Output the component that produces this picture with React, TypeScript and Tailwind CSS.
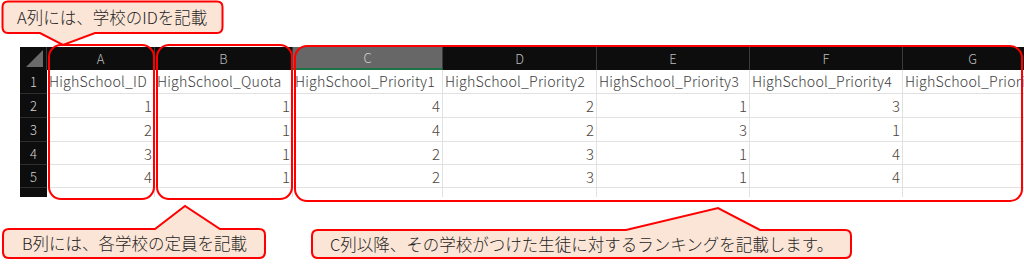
import React from "react";

const cols = ["A", "B", "C", "D", "E", "F", "G"];
const headers = [
  "HighSchool_ID",
  "HighSchool_Quota",
  "HighSchool_Priority1",
  "HighSchool_Priority2",
  "HighSchool_Priority3",
  "HighSchool_Priority4",
  "HighSchool_Priority5",
];
const data = [
  [1, 1, 4, 2, 1, 3],
  [2, 1, 4, 2, 3, 1],
  [3, 1, 2, 3, 1, 4],
  [4, 1, 2, 3, 1, 4],
];
const rowH = ["h-[24px]", "h-[24px]", "h-[23px]", "h-[23px]", "h-[24px]", "h-[9px]"];

function Sheet() {
  return (
    <div
      className="grid grid-cols-[27px_108px_138px_150px_154px_153px_153px_140px] overflow-hidden w-[1004px] text-[14.2px] font-light leading-none"
      style={{ fontFamily: '"Noto Sans CJK JP", "Noto Sans", sans-serif' }}
    >
      {/* header row */}
      <div className="h-[23px] bg-[#0d0d0d] relative border-r border-[#3a3a3a]">
        <div className="absolute right-[3px] bottom-[3px] w-0 h-0 border-l-[17px] border-l-transparent border-b-[17px] border-b-[#6b6b6b]" />
      </div>
      {cols.map((c) => (
        <div
          key={c}
          className={
            c === "C"
              ? "h-[23px] bg-[#676767] border-r border-[#3a3a3a] border-b-2 border-b-[#1e7145] flex items-center justify-center text-[13px] text-[#d0d0d0]"
              : "h-[23px] bg-[#0d0d0d] border-r border-[#3a3a3a] flex items-center justify-center text-[13px] text-[#bdbdbd]"
          }
        >
          {c}
        </div>
      ))}
      {/* row 1 */}
      <div className="h-[24px] bg-[#0d0d0d] border-b border-[#2e2e2e] flex items-center justify-center text-[13px] text-[#d4d4d4]">
        1
      </div>
      {headers.map((h) => (
        <div
          key={h}
          className="h-[24px] bg-white border-r border-b border-[#e1e1e1] flex items-center pl-[2px] text-[#404040] whitespace-nowrap overflow-hidden tracking-[0.2px]"
        >
          {h}
        </div>
      ))}
      {data.map((row, i) => (
        <React.Fragment key={i}>
          <div
            className={`${rowH[i]} bg-[#0d0d0d] border-b border-[#2e2e2e] flex items-center justify-center text-[13px] text-[#d4d4d4]`}
          >
            {i + 2}
          </div>
          {row.map((v, j) => (
            <div
              key={j}
              className={`${rowH[i]} bg-white border-r border-b border-[#e1e1e1] flex items-center justify-end pr-[2px] text-[15px] text-[#4d463c]`}
            >
              {v}
            </div>
          ))}
          <div className={`${rowH[i]} bg-white border-r border-b border-[#e1e1e1]`} />
        </React.Fragment>
      ))}
      <div className="h-[9px] bg-[#0d0d0d]" />
      {cols.map((c) => (
        <div key={c} className="h-[9px] bg-white border-r border-[#e1e1e1]" />
      ))}
    </div>
  );
}

export default function App() {
  const font = { fontFamily: '"Noto Sans CJK JP", "Noto Sans", sans-serif' };
  return (
    <div className="relative w-[1024px] h-[264px] bg-white overflow-hidden">
      <div className="pt-[47px] pl-[20px]">
        <Sheet />
      </div>

      <svg
        className="absolute inset-0 pointer-events-none"
        width="1024"
        height="264"
        viewBox="0 0 1024 264"
      >
        <g fill="none" stroke="#ff0000" strokeWidth="2">
          <rect x="49" y="45" width="105" height="154" rx="12" />
          <rect x="157" y="45" width="135" height="154" rx="12" />
          <rect x="295" y="46" width="727" height="155" rx="12" />
        </g>
        <g fill="#fbe5d6" stroke="#ff0000" strokeWidth="2" strokeLinejoin="miter">
          <path d="M8 1.5 H217 Q222.5 1.5 222.5 7 V27 Q222.5 33 217 33 H95 L63 45 L40 33 H8 Q2.5 33 2.5 27 V7 Q2.5 1.5 8 1.5 Z" />
          <path d="M9 229 H155 L185 206 L220 229 H259 Q265 229 265 235 V252 Q265 258 259 258 H9 Q3 258 3 252 V235 Q3 229 9 229 Z" />
          <path d="M318 230 H626 L718 208 L760 230 H845 Q851 230 851 236 V252 Q851 258 845 258 H318 Q312 258 312 252 V236 Q312 230 318 230 Z" />
        </g>
      </svg>

      <div
        className="absolute left-[17px] top-[2px] h-[31px] flex items-center text-[16.5px] font-light text-[#262626] leading-none"
        style={font}
      >
        A列には、学校のIDを記載
      </div>
      <div
        className="absolute left-[22px] top-[229px] h-[29px] flex items-center text-[16.5px] font-light text-[#262626] leading-none"
        style={font}
      >
        B列には、各学校の定員を記載
      </div>
      <div
        className="absolute left-[330px] top-[230px] h-[28px] flex items-center text-[16.5px] font-light text-[#262626] leading-none"
        style={font}
      >
        C列以降、その学校がつけた生徒に対するランキングを記載します。
      </div>
    </div>
  );
}
